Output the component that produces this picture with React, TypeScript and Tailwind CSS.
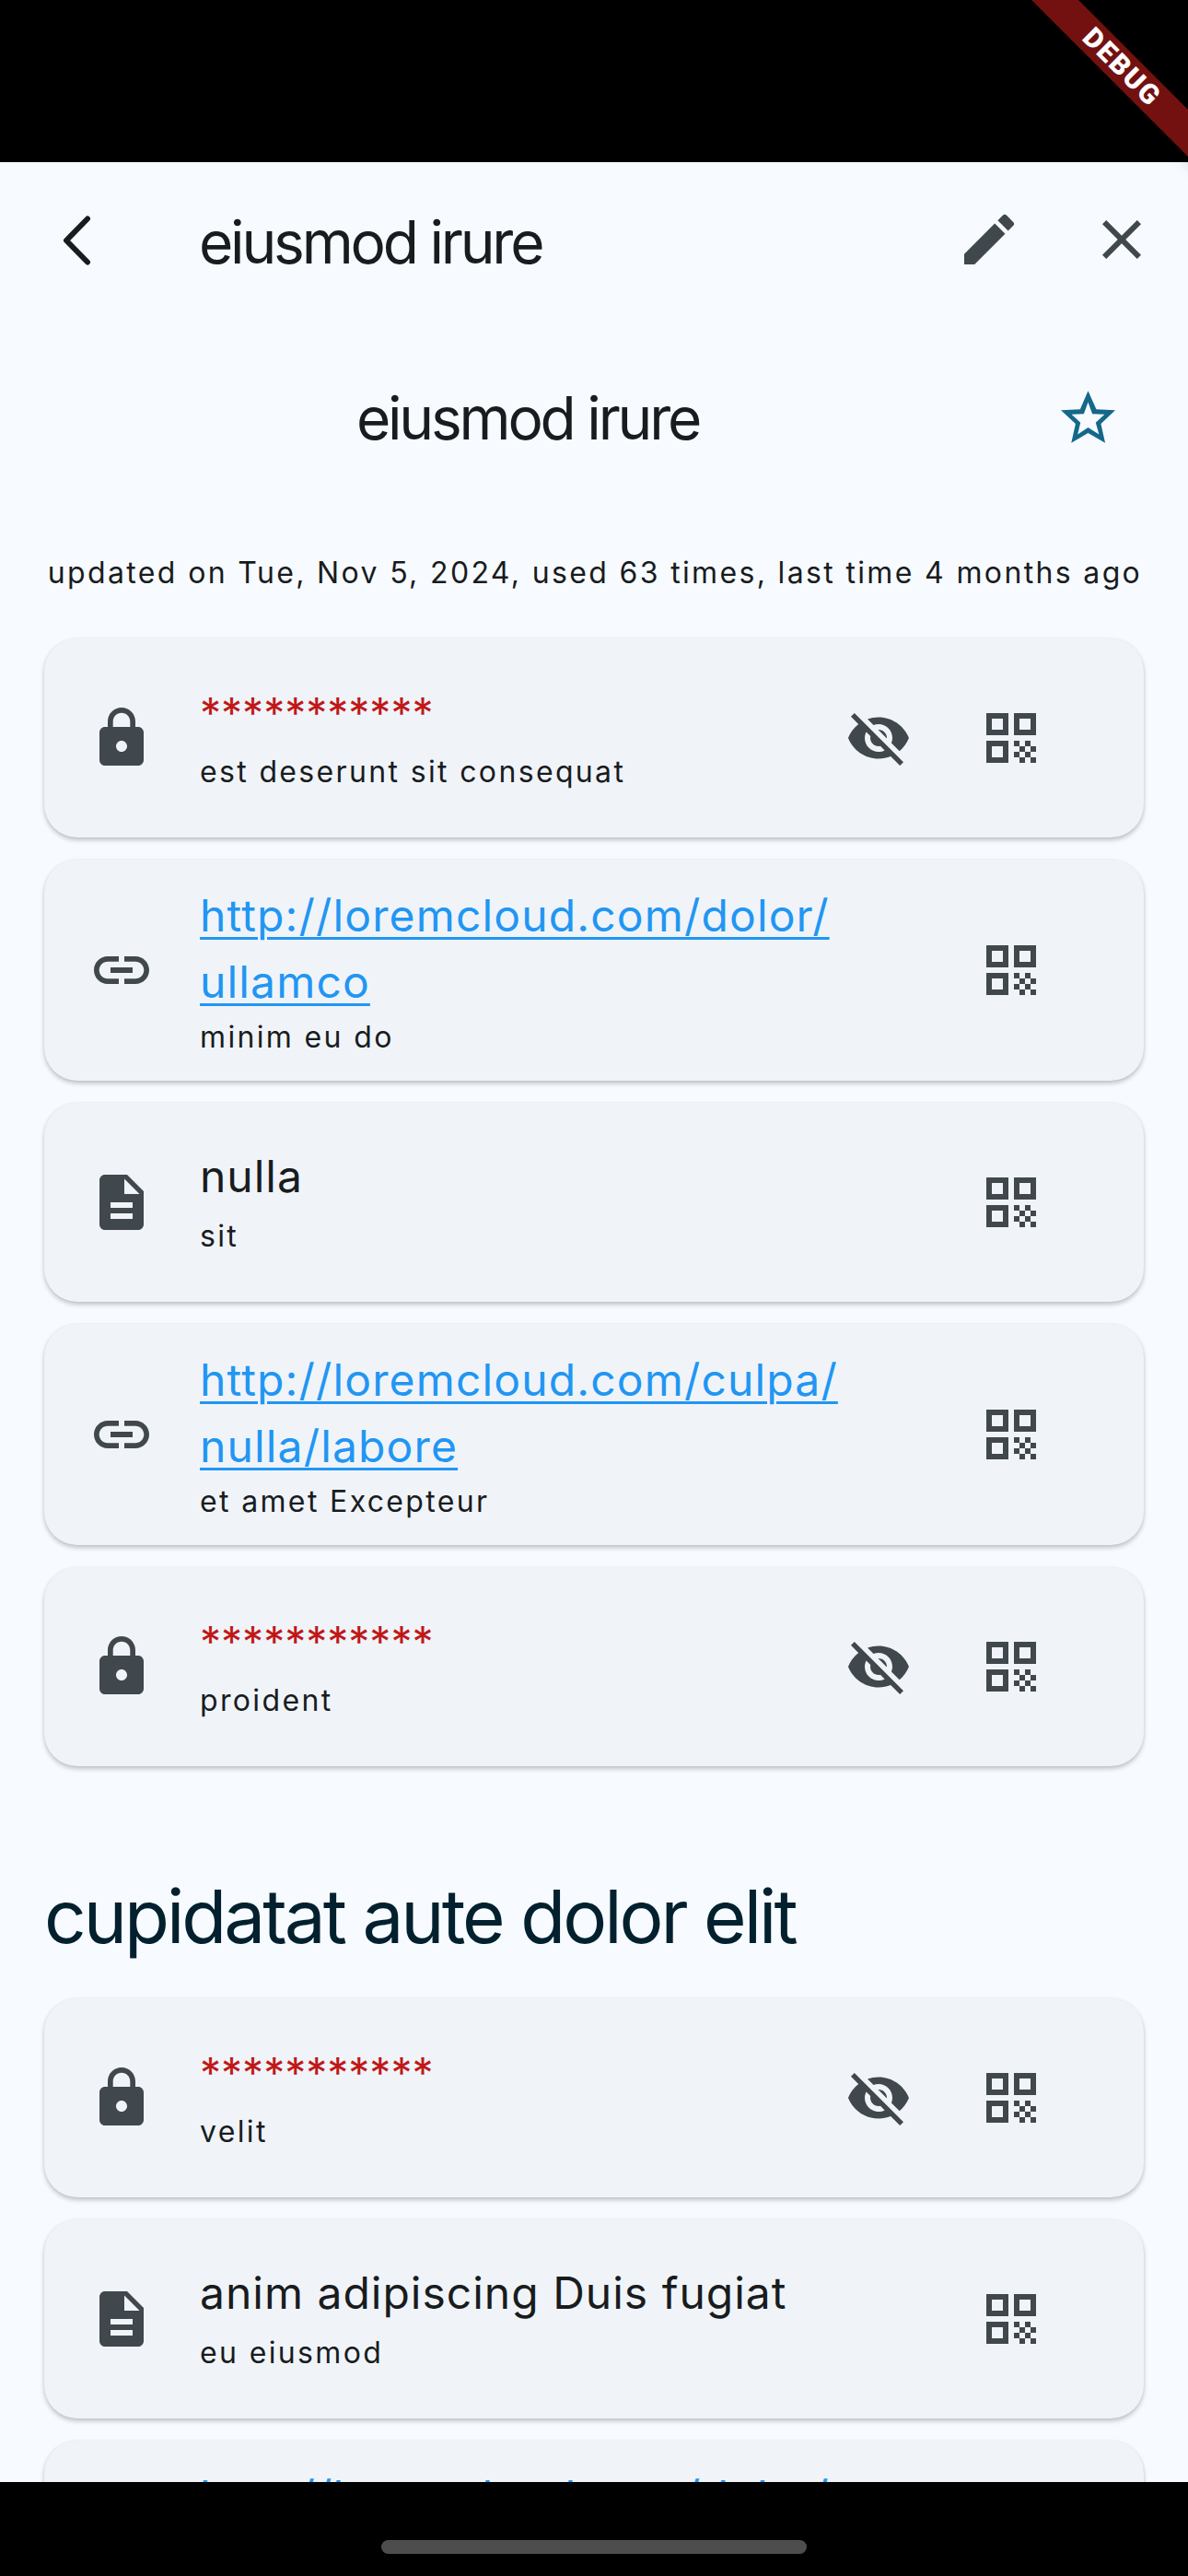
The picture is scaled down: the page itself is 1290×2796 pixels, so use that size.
import React from "react";
import { MdLock, MdLink, MdDescription, MdQrCode, MdVisibilityOff, MdEdit, MdClose } from "react-icons/md";

type Kind = "lock" | "link" | "note";
type Item = { kind: Kind; lines: string[]; sub: string };

const first: Item[] = [
  { kind: "lock", lines: ["***********"], sub: "est deserunt sit consequat" },
  { kind: "link", lines: ["http://loremcloud.com/dolor/", "ullamco"], sub: "minim eu do" },
  { kind: "note", lines: ["nulla"], sub: "sit" },
  { kind: "link", lines: ["http://loremcloud.com/culpa/", "nulla/labore"], sub: "et amet Excepteur" },
  { kind: "lock", lines: ["***********"], sub: "proident" },
];
const second: Item[] = [
  { kind: "lock", lines: ["***********"], sub: "velit" },
  { kind: "note", lines: ["anim adipiscing Duis fugiat"], sub: "eu eiusmod" },
  { kind: "link", lines: ["http://loremcloud.com/dolor/", "ullamco"], sub: "minim" },
];

function Card({ item }: { item: Item }) {
  const Icon = item.kind === "lock" ? MdLock : item.kind === "link" ? MdLink : MdDescription;
  return (
    <div className="mx-12 flex min-h-[216px] shrink-0 items-center rounded-[36px] bg-[#f0f4f9] py-6 pl-12 pr-[72px] shadow-[0_3px_5px_rgba(0,0,0,0.22),0_0_3px_rgba(0,0,0,0.06)]">
      <Icon className="h-[72px] w-[72px] shrink-0 text-[#41484d]" />
      <div className="ml-[49px] min-w-0 flex-1">
        {item.lines.map((l) =>
          item.kind === "lock" ? (
            <div key={l} className="pb-[6px] text-[46px] leading-[66px] tracking-[0px] text-[#c01818]">{l}</div>
          ) : item.kind === "link" ? (
            <div key={l} className="-mb-[2px] text-[48px] leading-[74px] tracking-[1.15px] text-[#2196f3] underline decoration-[3px] underline-offset-[6px]">{l}</div>
          ) : (
            <div key={l} className="pb-2 text-[48px] leading-[64px] tracking-[1px] text-[#191c1e]">{l}</div>
          ),
        )}
        <div className="-mb-[2px] text-[32px] leading-[50px] tracking-[2.35px] text-[#191c1e]">{item.sub}</div>
      </div>
      {item.kind === "lock" && (
        <div className="flex h-[144px] w-[144px] shrink-0 items-center justify-center text-[#41484d]">
          <MdVisibilityOff className="h-[72px] w-[72px]" />
        </div>
      )}
      <div className="flex h-[144px] w-[144px] shrink-0 items-center justify-center text-[#41484d]">
        <MdQrCode className="h-[72px] w-[72px]" />
      </div>
    </div>
  );
}

export default function App() {
  return (
    <div className="relative flex h-[2796px] w-[1290px] flex-col overflow-hidden bg-black font-['Inter',sans-serif]">
      <div className="h-[176px] shrink-0 bg-black" />
      <main className="flex min-h-0 flex-1 flex-col overflow-hidden bg-[#f7fbff]">
        <header className="flex h-[168px] shrink-0 items-center pl-12">
          <div className="flex h-[72px] w-[72px] shrink-0 items-center justify-center">
            <svg width="72" height="72" viewBox="0 0 72 72" fill="none">
              <path d="M47 13.5 L24 37 L47 60.5" stroke="#191c1e" strokeWidth="6" strokeLinecap="round" strokeLinejoin="round" />
            </svg>
          </div>
          <h1 className="ml-24 flex-1 pt-[6px] text-[64px] font-normal leading-[84px] tracking-[-3.2px] text-[#191c1e]">eiusmod irure</h1>
          <div className="flex h-[144px] w-[144px] items-center justify-center text-[#41484d]"><MdEdit className="h-[72px] w-[72px]" /></div>
          <div className="flex h-[144px] w-[144px] items-center justify-center text-[#41484d]"><MdClose className="h-[72px] w-[72px]" /></div>
        </header>
        <div className="mt-9 flex h-[144px] shrink-0 items-center pl-12 pr-[37px]">
          <div className="flex-1 pr-[11px] pt-1 text-center text-[64px] leading-[84px] tracking-[-3.2px] text-[#191c1e]">eiusmod irure</div>
          <div className="flex h-[144px] w-[144px] items-center justify-center">
            <svg className="h-[57px] w-[59px]" viewBox="97 70 178 170" fill="#14688a" fillRule="evenodd">
              <path d="M186 70 L213 130 L275 133 L228 178 L242 240 L186 208 L131 240 L145 178 L97 133 L160 130 Z M186 107 L172 145 L132 147 L161 174 L152 212 L186 190 L222 212 L211 174 L240 147 L200 145 Z" />
            </svg>
          </div>
        </div>
        <div className="mt-[74px] mb-[47px] h-12 shrink-0 pl-[2px] text-center text-[32px] leading-[48px] tracking-[2.35px] text-[#191c1e]">updated on Tue, Nov 5, 2024, used 63 times, last time 4 months ago</div>
        <div className="flex shrink-0 flex-col gap-6">
          {first.map((it, i) => <Card key={i} item={it} />)}
        </div>
        <h2 className="mx-12 mt-[109px] mb-[35px] shrink-0 text-[80px] font-normal leading-[108px] tracking-[-3px] text-[#02202e]">cupidatat aute dolor elit</h2>
        <div className="flex shrink-0 flex-col gap-6">
          {second.map((it, i) => <Card key={i} item={it} />)}
        </div>
      </main>
      <div className="flex h-[102px] shrink-0 items-start justify-center bg-black pt-[63px]">
        <div className="h-[15px] w-[462px] rounded-[8px] bg-[#4d4d4d]" />
      </div>
      <div className="absolute left-[1125px] top-[-46px] flex h-[36px] w-[300px] origin-top-left rotate-45 items-center justify-center bg-[#731111] font-['Roboto',sans-serif] text-[30px] font-black leading-none tracking-[2px] text-white shadow-[0_0_18px_rgba(0,0,0,0.25)]">DEBUG</div>
    </div>
  );
}
